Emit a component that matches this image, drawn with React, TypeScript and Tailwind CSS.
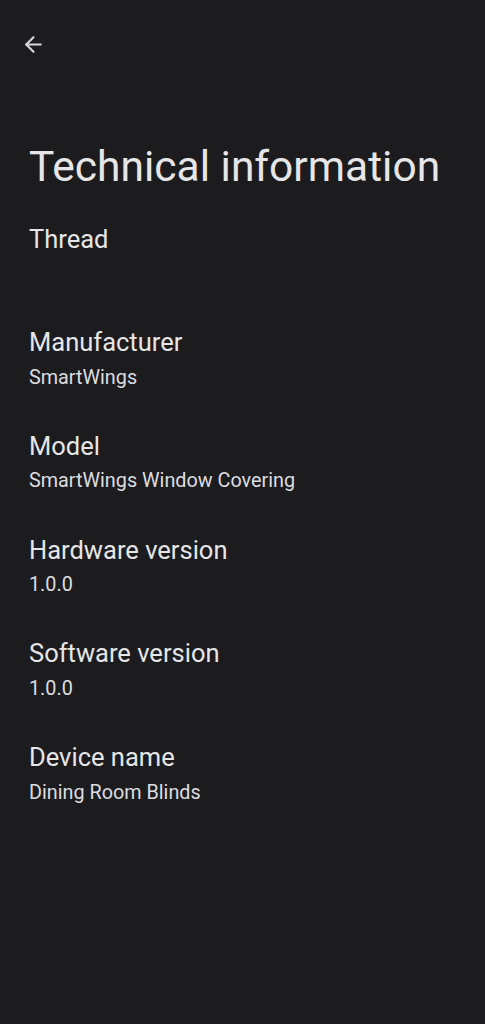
import { ArrowLeft } from "lucide-react";

const details = [
  { label: "Manufacturer", value: "SmartWings" },
  { label: "Model", value: "SmartWings Window Covering" },
  { label: "Hardware version", value: "1.0.0" },
  { label: "Software version", value: "1.0.0" },
  { label: "Device name", value: "Dining Room Blinds" },
];

export default function App() {
  return (
    <div
      className="min-h-screen bg-[#1c1c1e] text-[#e6e6e8]"
      style={{ fontFamily: "Roboto, 'Noto Sans', sans-serif" }}
    >
      <header className="h-[90px] flex items-center px-[20px] pb-[2px]">
        <button className="w-[26px] h-[26px] flex items-center justify-center text-[#d8d8dc]">
          <ArrowLeft size={25} strokeWidth={2} />
        </button>
      </header>

      <div className="px-[29px]">
        <h1 className="text-[42.5px] leading-[52px] mt-[51px] whitespace-nowrap">
          Technical information
        </h1>
        <p className="text-[25.5px] leading-[32px] mt-[30px]">Thread</p>

        <dl className="mt-[71px] flex flex-col gap-[39.25px]">
          {details.map((d) => (
            <div key={d.label}>
              <dt className="text-[25.5px] leading-[32px]">{d.label}</dt>
              <dd className="text-[19.8px] leading-[26px] mt-[6.5px] text-[#dcdce0]">
                {d.value}
              </dd>
            </div>
          ))}
        </dl>
      </div>
    </div>
  );
}
